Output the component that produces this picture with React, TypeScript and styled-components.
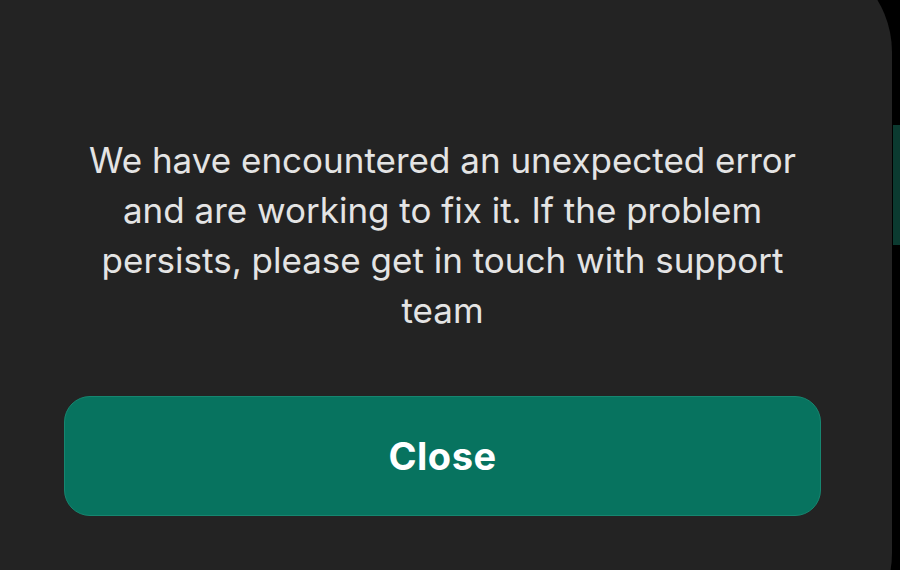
import React from "react";
import styled, { createGlobalStyle } from "styled-components";

const Global = createGlobalStyle`
  html, body { margin: 0; padding: 0; background: #000; overflow: hidden; }
  body { font-family: Inter, "Noto Sans", sans-serif; }
`;

const Screen = styled.div`
  display: flex;
  align-items: flex-start;
  width: 900px;
  height: 570px;
  overflow: hidden;
  background: #000;
`;

const Card = styled.div`
  box-sizing: border-box;
  flex: 0 0 892px;
  height: 701px;
  margin-top: -48px;
  background: #232323;
  border-radius: 0 100px 100px 0;
  display: flex;
  flex-direction: column;
  align-items: stretch;
  padding: 183px 71px 0 64px;
`;

const SideTab = styled.div`
  flex: 0 0 7px;
  height: 120px;
  margin: 125px 0 0 1px;
  background: #0b3a30;
`;

const Message = styled.p`
  margin: 0 -20px;
  text-align: center;
  color: #e4e4e4;
  font-family: Inter, "Noto Sans", sans-serif;
  font-size: 35px;
  line-height: 50px;
  font-weight: 400;
`;

const CloseButton = styled.button`
  margin-top: 61px;
  height: 120px;
  width: 100%;
  border: 1px solid #168670;
  border-radius: 26px;
  background: #07735f;
  color: #ffffff;
  font-family: Inter, "Noto Sans", sans-serif;
  font-weight: 700;
  font-size: 38px;
  letter-spacing: 0.5px;
  cursor: pointer;
  padding: 0;
`;

export default function App() {
  return (
    <>
      <Global />
      <Screen>
        <Card>
          <Message>
            We have encountered an unexpected error
            <br />
            and are working to fix it. If the problem
            <br />
            persists, please get in touch with support
            <br />
            team
          </Message>
          <CloseButton>Close</CloseButton>
        </Card>
        <SideTab />
      </Screen>
    </>
  );
}
